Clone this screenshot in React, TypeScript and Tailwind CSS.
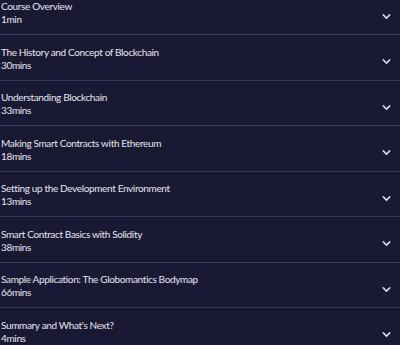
import React from "react";
import { ChevronDown } from "lucide-react";

const items = [
  ["Course Overview", "1min"],
  ["The History and Concept of Blockchain", "30mins"],
  ["Understanding Blockchain", "33mins"],
  ["Making Smart Contracts with Ethereum", "18mins"],
  ["Setting up the Development Environment", "13mins"],
  ["Smart Contract Basics with Solidity", "38mins"],
  ["Sample Application: The Globomantics Bodymap", "66mins"],
  ["Summary and What's Next?", "4mins"],
];

export default function App() {
  return (
    <div
      className="w-[400px] h-[345px] overflow-hidden bg-[#1a1933] text-[#e6e6f0]"
      style={{ fontFamily: "Lato, 'Liberation Sans', sans-serif" }}
    >
      <div className="-mt-[10.5px]">
        {items.map(([t, m], i) => (
          <div
            key={i}
            className="h-[45.5px] flex items-center justify-between border-b border-[#3a3960] pl-[1px] pr-[7px]"
          >
            <div className="flex flex-col text-[10px] leading-[13px] pt-[3px] tracking-[-0.35px]">
              <span>{t}</span>
              <span>{m}</span>
            </div>
            <ChevronDown size={13} strokeWidth={2.75} className="mt-[9px] text-[#dcdcec]" />
          </div>
        ))}
      </div>
    </div>
  );
}
